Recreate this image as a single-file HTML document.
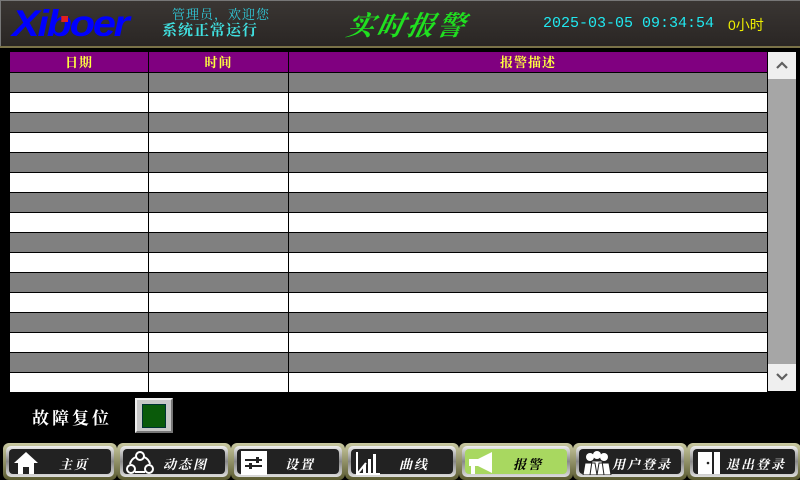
<!DOCTYPE html>
<html><head><meta charset="utf-8"><style>
*{margin:0;padding:0;box-sizing:border-box}
body{width:800px;height:480px;background:#000;position:relative;overflow:hidden;font-family:"Liberation Sans","Noto Sans CJK SC",sans-serif}
.hdr{position:absolute;left:0;top:0;width:800px;height:46px;background:linear-gradient(#3a3633,#2a2624);border-top:1px solid #777;border-left:1px solid #777}
.gold{position:absolute;left:0;top:46px;width:800px;height:2px;background:#7a7248}
.logo{position:absolute;left:12px;top:3px;font:italic bold 37px "Liberation Sans",sans-serif;color:#0000ff;letter-spacing:-2px;transform:scaleX(1.12);transform-origin:left}
.logo i{position:absolute;left:44px;top:13px;width:6px;height:6px;background:#e02020}
.t1{position:absolute;left:172px;top:4px;color:#30c8d8;font:13px "Noto Serif CJK SC",serif;letter-spacing:1px}
.t2{position:absolute;left:162px;top:19px;color:#40e0e0;font:bold 15px "Noto Serif CJK SC",serif;letter-spacing:1px}
.title{position:absolute;left:348px;top:4px;color:#20e020;font:italic bold 27px "Noto Serif CJK SC",serif;letter-spacing:3px;transform:skewX(-12deg)}
.dt{position:absolute;left:543px;top:15px;color:#20e8f0;font:15px "Liberation Mono","DejaVu Sans Mono",monospace}
.hr{position:absolute;left:728px;top:15px;color:#f0f000;font:14px "Liberation Sans","Noto Sans CJK SC",sans-serif}
table{position:absolute;left:9px;top:52px;width:759px;border-collapse:collapse;table-layout:fixed}
td,th{height:20px;border:1px solid #000;border-top:none;padding:0}
th{background:#800080;color:#ffff40;font:bold 13px "Noto Serif CJK SC",serif;letter-spacing:1px;height:20px}
tr.g td{background:#808080}
tr.w td{background:#fff}
.sb{position:absolute;left:768px;top:52px;width:28px;height:339px;background:#a6a6a6}
.ar{position:absolute;left:0;width:28px;height:27px;background:#efefef}
.ar svg{position:absolute;left:8px;top:9px}
.rst{position:absolute;left:32px;top:404px;color:#fff;font:bold 17px "Noto Serif CJK SC",serif;letter-spacing:3px}
.rb{position:absolute;left:135px;top:398px;width:38px;height:35px;background:#c8c8c8;border:2px solid #eee;border-right-color:#777;border-bottom-color:#777}
.rb i{position:absolute;left:5px;top:4px;width:24px;height:24px;background:#0a5a0a;border:1px solid #033}
.nav{position:absolute;top:443px;height:37px;width:114px;background:linear-gradient(#c8c8a0,#5a5a30);border-radius:6px;padding:3px}
.nav .in{width:100%;height:100%;border-radius:5px;background:linear-gradient(#eee,#888 50%,#ddd);padding:3px}
.nav .c{width:100%;height:100%;border-radius:4px;background:#222;position:relative;color:#fff;font:italic bold 13px "Noto Serif CJK SC",serif;letter-spacing:2px}
.nav.act .c{background:#a8d860;color:#000}
.c span{position:absolute;top:5px}
.c svg{position:absolute;left:3px;top:2px}
</style></head><body>
<div class="hdr"></div><div class="gold"></div>
<div class="logo">Xiboer<i></i></div>
<div class="t1">管理员，欢迎您</div>
<div class="t2">系统正常运行</div>
<div class="title">实时报警</div>
<div class="dt">2025-03-05 09:34:54</div>
<div class="hr">0小时</div>
<table>
<colgroup><col style="width:139px"><col style="width:140px"><col></colgroup>
<tr><th>日期</th><th>时间</th><th>报警描述</th></tr>
<tr class="g"><td></td><td></td><td></td></tr><tr class="w"><td></td><td></td><td></td></tr>
<tr class="g"><td></td><td></td><td></td></tr><tr class="w"><td></td><td></td><td></td></tr>
<tr class="g"><td></td><td></td><td></td></tr><tr class="w"><td></td><td></td><td></td></tr>
<tr class="g"><td></td><td></td><td></td></tr><tr class="w"><td></td><td></td><td></td></tr>
<tr class="g"><td></td><td></td><td></td></tr><tr class="w"><td></td><td></td><td></td></tr>
<tr class="g"><td></td><td></td><td></td></tr><tr class="w"><td></td><td></td><td></td></tr>
<tr class="g"><td></td><td></td><td></td></tr><tr class="w"><td></td><td></td><td></td></tr>
<tr class="g"><td></td><td></td><td></td></tr><tr class="w"><td style="height:19px"></td><td></td><td></td></tr>
</table>
<div class="sb"><div class="ar" style="top:0"><svg width="12" height="8" viewBox="0 0 12 8"><path d="M1 7 L6 2 L11 7" stroke="#606060" stroke-width="2.2" fill="none"/></svg></div><div class="ar" style="bottom:0"><svg width="12" height="8" viewBox="0 0 12 8"><path d="M1 1 L6 6 L11 1" stroke="#606060" stroke-width="2.2" fill="none"/></svg></div></div>
<div class="rst">故障复位</div>
<div class="rb"><i></i></div>

<div class="nav" style="left:3px"><div class="in"><div class="c"><svg width="30" height="24" viewBox="0 0 30 24"><path d="M2 12 L14 1 L26 12 L22 12 L22 23 L17 23 L17 16 L11 16 L11 23 L6 23 L6 12Z" fill="#fff"/></svg><span style="left:50px">主页</span></div></div></div>
<div class="nav" style="left:117px"><div class="in"><div class="c"><svg width="30" height="24" viewBox="0 0 30 24"><circle cx="14" cy="5" r="4" fill="none" stroke="#fff" stroke-width="2"/><circle cx="5" cy="18" r="4" fill="none" stroke="#fff" stroke-width="2"/><circle cx="23" cy="18" r="4" fill="none" stroke="#fff" stroke-width="2"/><path d="M10 6 A10 10 0 0 0 4 13 M18 6 A10 10 0 0 1 24 13 M9 21 H19" stroke="#fff" stroke-width="2" fill="none"/></svg><span style="left:40px">动态图</span></div></div></div>
<div class="nav" style="left:231px"><div class="in"><div class="c"><svg width="30" height="24" viewBox="0 0 30 24"><rect x="1" y="0" width="26" height="24" fill="#fff"/><path d="M5 9 H22 M5 15 H22" stroke="#222" stroke-width="2"/><rect x="16" y="6" width="3" height="6" fill="#222"/><rect x="9" y="12" width="3" height="6" fill="#222"/></svg><span style="left:48px">设置</span></div></div></div>
<div class="nav" style="left:345px"><div class="in"><div class="c"><svg width="30" height="24" viewBox="0 0 30 24"><path d="M2 23 H26 M3 23 V1 M4 22 L12 12" stroke="#fff" stroke-width="2" fill="none"/><rect x="9" y="14" width="3" height="9" fill="#fff"/><rect x="14" y="8" width="3" height="15" fill="#fff"/><rect x="19" y="3" width="3" height="20" fill="#fff"/></svg><span style="left:48px">曲线</span></div></div></div>
<div class="nav act" style="left:459px"><div class="in"><div class="c"><svg width="34" height="24" viewBox="0 0 34 24"><path d="M1 8 H10 L24 1 V22 L10 15 H7 V23 H3 V15 H1Z" fill="#fff"/></svg><span style="left:48px">报警</span></div></div></div>
<div class="nav" style="left:573px"><div class="in"><div class="c"><svg width="30" height="24" viewBox="0 0 30 24"><circle cx="8" cy="6" r="4" fill="#fff"/><circle cx="15" cy="4" r="4" fill="#fff"/><circle cx="22" cy="6" r="4" fill="#fff"/><path d="M1 24 L3 12 H13 L15 24Z M8 24 L10 10 H20 L22 24Z M15 24 L17 12 H27 L29 24Z" fill="#fff" stroke="#222" stroke-width="1"/></svg><span style="left:33px">用户登录</span></div></div></div>
<div class="nav" style="left:687px"><div class="in"><div class="c"><svg width="30" height="24" viewBox="0 0 30 24"><rect x="2" y="1" width="14" height="22" fill="#fff"/><rect x="18" y="1" width="6" height="22" fill="#fff"/><circle cx="12" cy="12" r="1.3" fill="#222"/></svg><span style="left:33px">退出登录</span></div></div></div>
</body></html>
